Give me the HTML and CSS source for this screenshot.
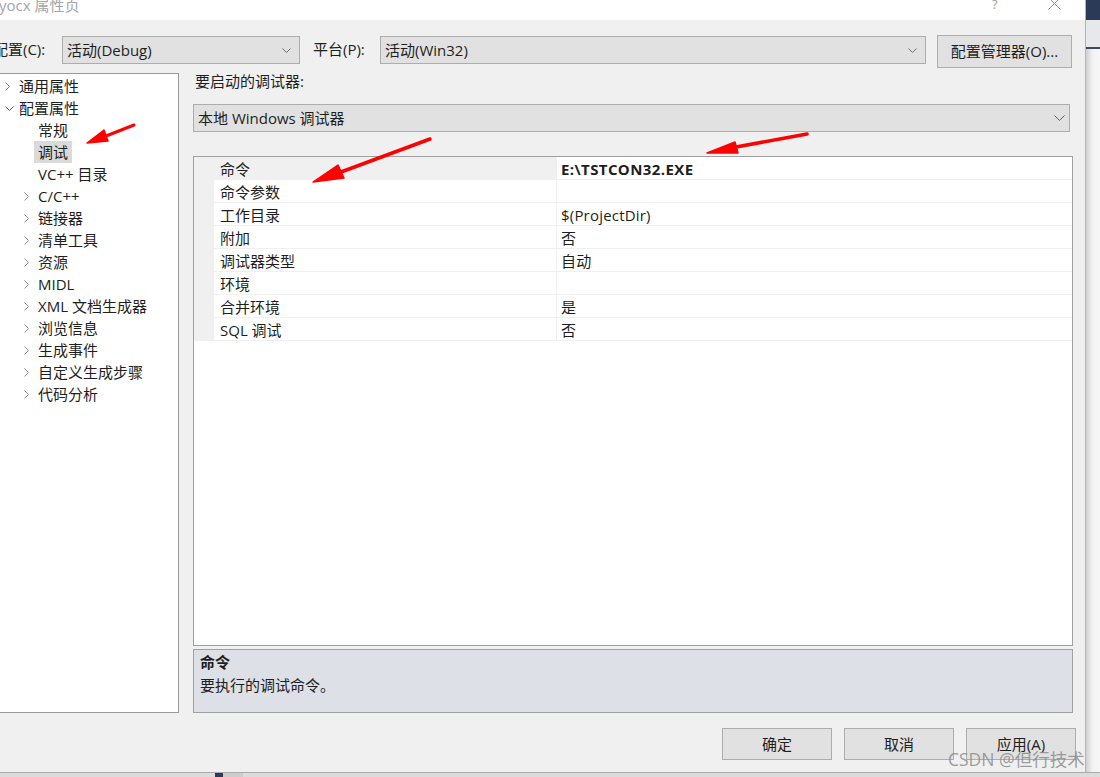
FILE: index.html
```html
<!DOCTYPE html>
<html lang="zh-CN">
<head>
    <meta charset="UTF-8" />
    <title>yocx 属性页</title>
    <link rel="stylesheet" href="styles.css">
</head>
<body>
    <div class="screen">
        <div class="dialog">

            <!-- Titelleiste -->
            <div class="titlebar">
                <span class="title">yocx 属性页</span>
                <span class="help">?</span>
                <svg class="close" width="13" height="13" viewBox="0 0 13 13"><path d="M0.5 0.5 L12.5 12.5 M12.5 0.5 L0.5 12.5" stroke="#8c8c8c" stroke-width="1" fill="none"/></svg>
            </div>

            <!-- Konfiguration / Plattform -->
            <div class="cfg-row">
                <span class="cfg-label cfg-first">配置(C):</span>
                <div class="combo combo-cfg">
                    <span>活动(Debug)</span>
                    <svg width="9" height="5" viewBox="0 0 9 5"><path d="M0.5 0.5 L4.5 4.5 L8.5 0.5" stroke="#707070" fill="none"/></svg>
                </div>
                <span class="cfg-label cfg-second">平台(P):</span>
                <div class="combo combo-plat">
                    <span>活动(Win32)</span>
                    <svg width="9" height="5" viewBox="0 0 9 5"><path d="M0.5 0.5 L4.5 4.5 L8.5 0.5" stroke="#707070" fill="none"/></svg>
                </div>
                <button class="btn btn-manager">配置管理器(O)...</button>
            </div>

            <div class="main">
                <!-- Baum links -->
                <div class="tree">
                    <div class="node lvl1"><span class="chev"><svg width="5" height="9" viewBox="0 0 5 9"><path d="M0.5 0.5 L4.5 4.5 L0.5 8.5" stroke="#8a8a8a" fill="none"/></svg></span>通用属性</div>
                    <div class="node lvl1"><span class="chev"><svg width="9" height="5" viewBox="0 0 9 5"><path d="M0.5 0.5 L4.5 4.5 L8.5 0.5" stroke="#555" fill="none"/></svg></span>配置属性</div>
                    <div class="node lvl2"><span class="chev"></span>常规</div>
                    <div class="node lvl2"><span class="chev"></span><span class="selected">调试</span></div>
                    <div class="node lvl2"><span class="chev"></span>VC++ 目录</div>
                    <div class="node lvl2"><span class="chev"><svg width="5" height="9" viewBox="0 0 5 9"><path d="M0.5 0.5 L4.5 4.5 L0.5 8.5" stroke="#8a8a8a" fill="none"/></svg></span>C/C++</div>
                    <div class="node lvl2"><span class="chev"><svg width="5" height="9" viewBox="0 0 5 9"><path d="M0.5 0.5 L4.5 4.5 L0.5 8.5" stroke="#8a8a8a" fill="none"/></svg></span>链接器</div>
                    <div class="node lvl2"><span class="chev"><svg width="5" height="9" viewBox="0 0 5 9"><path d="M0.5 0.5 L4.5 4.5 L0.5 8.5" stroke="#8a8a8a" fill="none"/></svg></span>清单工具</div>
                    <div class="node lvl2"><span class="chev"><svg width="5" height="9" viewBox="0 0 5 9"><path d="M0.5 0.5 L4.5 4.5 L0.5 8.5" stroke="#8a8a8a" fill="none"/></svg></span>资源</div>
                    <div class="node lvl2"><span class="chev"><svg width="5" height="9" viewBox="0 0 5 9"><path d="M0.5 0.5 L4.5 4.5 L0.5 8.5" stroke="#8a8a8a" fill="none"/></svg></span>MIDL</div>
                    <div class="node lvl2"><span class="chev"><svg width="5" height="9" viewBox="0 0 5 9"><path d="M0.5 0.5 L4.5 4.5 L0.5 8.5" stroke="#8a8a8a" fill="none"/></svg></span>XML 文档生成器</div>
                    <div class="node lvl2"><span class="chev"><svg width="5" height="9" viewBox="0 0 5 9"><path d="M0.5 0.5 L4.5 4.5 L0.5 8.5" stroke="#8a8a8a" fill="none"/></svg></span>浏览信息</div>
                    <div class="node lvl2"><span class="chev"><svg width="5" height="9" viewBox="0 0 5 9"><path d="M0.5 0.5 L4.5 4.5 L0.5 8.5" stroke="#8a8a8a" fill="none"/></svg></span>生成事件</div>
                    <div class="node lvl2"><span class="chev"><svg width="5" height="9" viewBox="0 0 5 9"><path d="M0.5 0.5 L4.5 4.5 L0.5 8.5" stroke="#8a8a8a" fill="none"/></svg></span>自定义生成步骤</div>
                    <div class="node lvl2"><span class="chev"><svg width="5" height="9" viewBox="0 0 5 9"><path d="M0.5 0.5 L4.5 4.5 L0.5 8.5" stroke="#8a8a8a" fill="none"/></svg></span>代码分析</div>
                </div>

                <!-- Eigenschaften rechts -->
                <div class="panel">
                    <div class="panel-label">要启动的调试器:</div>
                    <div class="combo combo-debugger">
                        <span>本地 Windows 调试器</span>
                        <svg width="11" height="6" viewBox="0 0 11 6"><path d="M0.5 0.5 L5.5 5.5 L10.5 0.5" stroke="#606060" fill="none"/></svg>
                    </div>

                    <div class="grid">
                        <div class="row active">
                            <div class="gutter"></div>
                            <div class="name">命令</div>
                            <div class="value bold">E:\TSTCON32.EXE</div>
                        </div>
                        <div class="row">
                            <div class="gutter"></div>
                            <div class="name">命令参数</div>
                            <div class="value"></div>
                        </div>
                        <div class="row">
                            <div class="gutter"></div>
                            <div class="name">工作目录</div>
                            <div class="value">$(ProjectDir)</div>
                        </div>
                        <div class="row">
                            <div class="gutter"></div>
                            <div class="name">附加</div>
                            <div class="value">否</div>
                        </div>
                        <div class="row">
                            <div class="gutter"></div>
                            <div class="name">调试器类型</div>
                            <div class="value">自动</div>
                        </div>
                        <div class="row">
                            <div class="gutter"></div>
                            <div class="name">环境</div>
                            <div class="value"></div>
                        </div>
                        <div class="row">
                            <div class="gutter"></div>
                            <div class="name">合并环境</div>
                            <div class="value">是</div>
                        </div>
                        <div class="row">
                            <div class="gutter"></div>
                            <div class="name">SQL 调试</div>
                            <div class="value">否</div>
                        </div>
                    </div>

                    <div class="desc">
                        <div class="desc-title">命令</div>
                        <div>要执行的调试命令。</div>
                    </div>
                </div>
            </div>

            <div class="footer">
                <button class="btn btn-foot">确定</button>
                <button class="btn btn-foot">取消</button>
                <button class="btn btn-foot">应用(A)</button>
            </div>
        </div>

        <div class="side-strip">
            <div class="strip-top"></div>
            <div class="strip-tab"></div>
            <div class="strip-body"></div>
        </div>
    </div>

    <div class="taskbar">
        <div class="task-icon"></div>
        <div class="task-light"></div>
    </div>

    <!-- rote Pfeile (Markierungen) -->
    <svg class="marks" width="1100" height="777" viewBox="0 0 1100 777">
        <g fill="#ff0000" stroke="#ff0000" stroke-linecap="round" stroke-linejoin="round">
            <path d="M134 125 L106 136" stroke-width="3" fill="none"/>
            <polygon points="87,143 108,141 104,130" stroke-width="1.5"/>
            <path d="M430 139 L341 172" stroke-width="3.5" fill="none"/>
            <polygon points="313,182 344,178 338,165" stroke-width="1.5"/>
            <path d="M807 134 L736 147" stroke-width="3.5" fill="none"/>
            <polygon points="707,153 738,153 735,142" stroke-width="1.5"/>
        </g>
    </svg>

    <div class="watermark">CSDN @但行技术</div>
</body>
</html>
```

FILE: styles.css
```css
body {
    margin: 0;
    width: 1100px;
    height: 777px;
    overflow: hidden;
    position: relative;
    background-color: #f0f0f0;
    color: #1e1e1e;
    font-family: "Open Sans", "Noto Sans CJK SC", sans-serif;
    font-size: 15px;
}

.screen {
    display: flex;
    height: 772px;
}

.dialog {
    width: 1085px;
    border-right: 1px solid #b4b4b4;
    display: flex;
    flex-direction: column;
    background-color: #f0f0f0;
}

/* Titelleiste */
.titlebar {
    height: 20px;
    background-color: #fff;
    display: flex;
    align-items: flex-start;
    overflow: hidden;
}

.title {
    flex: 1;
    color: #a6a6a6;
    line-height: 20px;
    margin-top: -5px;
    margin-left: -1px;
}

.help {
    color: #a0a0a0;
    font-size: 13px;
    line-height: 14px;
    margin-top: -3px;
    width: 56px;
}

.close {
    margin-top: -3px;
    margin-right: 24px;
}

/* Konfiguration */
.cfg-row {
    height: 50px;
    box-sizing: border-box;
    padding-top: 15px;
    display: flex;
    align-items: flex-start;
}

.cfg-label {
    line-height: 26px;
    margin-top: 1px;
    white-space: nowrap;
}

.cfg-first {
    margin-left: -7px;
    width: 69px;
}

.cfg-second {
    margin-left: 13px;
    width: 67px;
}

.combo {
    box-sizing: border-box;
    height: 28px;
    margin-top: 1px;
    background-color: #e1e1e1;
    border: 1px solid #adadad;
    display: flex;
    align-items: center;
    justify-content: space-between;
    padding: 0 8px 2px 4px;
    white-space: nowrap;
}

.combo svg {
    margin-top: 2px;
}

.combo-cfg {
    width: 238px;
}

.combo-plat {
    width: 546px;
}

.btn {
    box-sizing: border-box;
    background-color: #e1e1e1;
    border: 1px solid #adadad;
    color: #1e1e1e;
    font-family: inherit;
    font-size: 15px;
    padding: 0 0 2px;
}

.btn-manager {
    margin-left: 11px;
    width: 135px;
    height: 33px;
}

/* Hauptbereich */
.main {
    height: 643px;
    display: flex;
}

.tree {
    box-sizing: border-box;
    margin-top: 3px;
    width: 179px;
    height: 640px;
    background-color: #fff;
    border: 1px solid #9a9a9a;
    border-left: none;
    padding-top: 1px;
}

.node {
    height: 22px;
    line-height: 22px;
    display: flex;
    align-items: center;
    white-space: nowrap;
}

.lvl1 {
    padding-left: 5px;
}

.lvl2 {
    padding-left: 24px;
}

.chev {
    width: 14px;
    display: flex;
    align-items: center;
}

.selected {
    background-color: #dadada;
    padding: 0 4px;
    margin-left: -4px;
}

.panel {
    margin-left: 14px;
    width: 880px;
    display: flex;
    flex-direction: column;
}

.panel-label {
    height: 22px;
    line-height: 22px;
    padding-left: 2px;
}

.combo-debugger {
    margin-top: 12px;
    width: 877px;
    padding-right: 4px;
}

.grid {
    box-sizing: border-box;
    margin-top: 24px;
    height: 490px;
    background-color: #fff;
    border: 1px solid #a0a0a0;
}

.row {
    display: grid;
    grid-template-columns: 20px 343px 1fr;
    height: 23px;
}

.gutter {
    background-color: #f0f0f0;
}

.name, .value {
    box-sizing: border-box;
    padding-top: 2px;
    line-height: 21px;
    border-bottom: 1px solid #f0f0f0;
    white-space: nowrap;
    overflow: hidden;
}

.name {
    padding-left: 6px;
    border-right: 1px solid #f0f0f0;
}

.value {
    padding-left: 4px;
    letter-spacing: 0.2px;
}

.row.active .name {
    background-color: #f0f0f0;
}

.bold {
    font-weight: bold;
    letter-spacing: 0.4px;
}

.desc {
    box-sizing: border-box;
    margin-top: 3px;
    height: 64px;
    background-color: #dde0e7;
    border: 1px solid #a0a0a0;
    padding: 1px 6px 0;
    line-height: 23px;
}

.desc-title {
    font-weight: bold;
}

/* Knöpfe unten */
.footer {
    flex: 1;
    display: flex;
    justify-content: flex-end;
    align-items: flex-start;
    gap: 12px;
    padding-top: 15px;
    padding-right: 9px;
}

.btn-foot {
    width: 110px;
    height: 32px;
}

/* Rand rechts und Taskleiste */
.side-strip {
    width: 14px;
    display: flex;
    flex-direction: column;
}

.strip-top {
    height: 20px;
    background-color: #2b3b57;
}

.strip-tab {
    height: 27px;
    background-color: #e6e8ec;
    border-bottom: 2px solid #3a4a66;
}

.strip-body {
    flex: 1;
    background: linear-gradient(90deg, #cfcfcf, #f2f2f2 45%, #f7f7f7);
}

.taskbar {
    height: 4px;
    border-top: 1px solid #aaa;
    background-color: #dcdcdc;
    display: flex;
}

.task-icon {
    margin-left: 215px;
    width: 8px;
    background-color: #2b3b57;
}

.task-light {
    width: 20px;
    background-color: #cdcdcd;
}

.marks {
    position: absolute;
    left: 0;
    top: 0;
    pointer-events: none;
}

.watermark {
    position: absolute;
    left: 948px;
    top: 748px;
    font-size: 17.5px;
    line-height: 22px;
    color: rgba(140, 140, 140, 0.85);
    white-space: nowrap;
}
```
